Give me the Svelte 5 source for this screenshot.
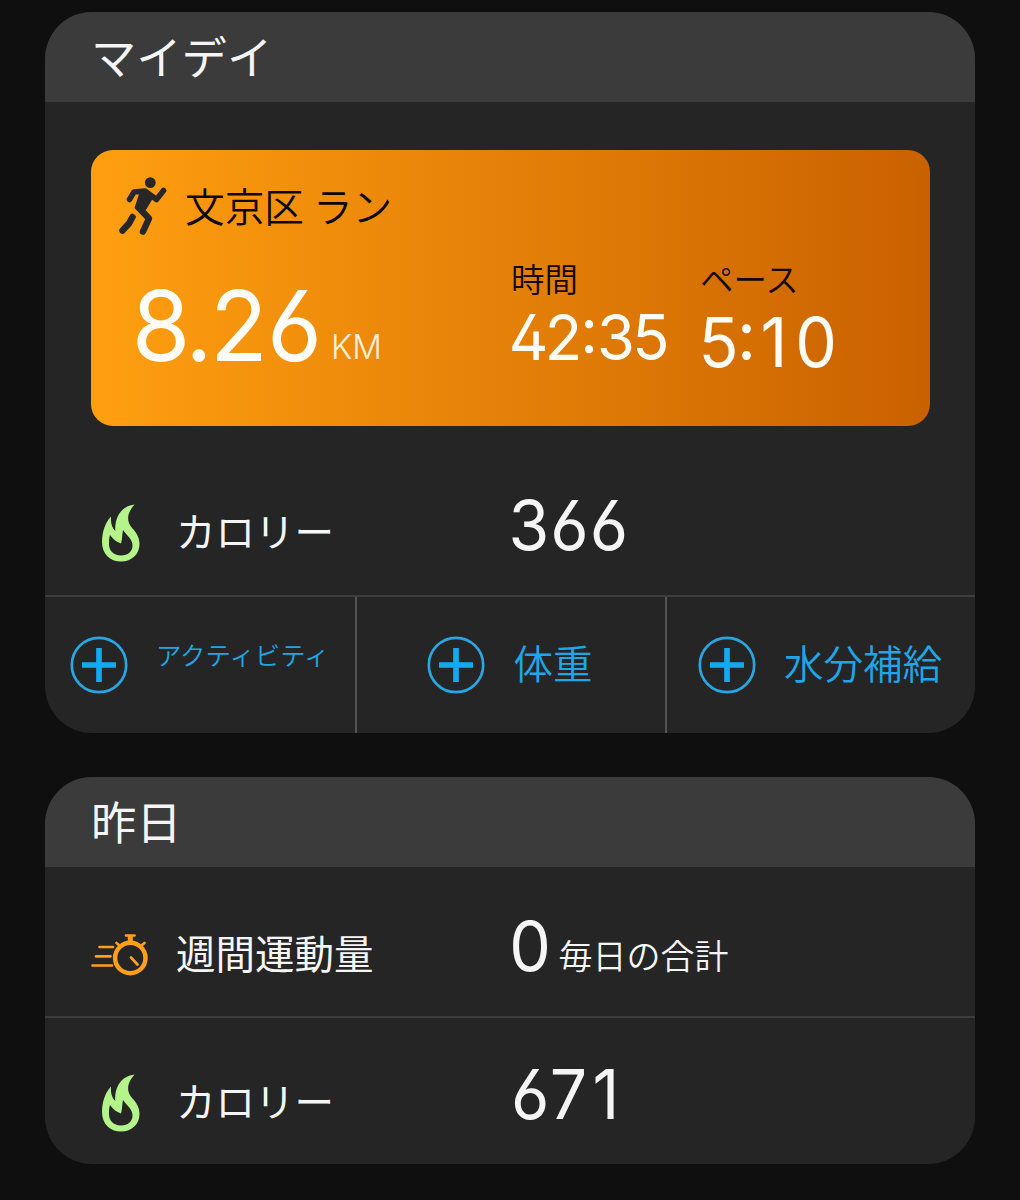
<script>
  const actions = [
    { label: 'アクティビティ', kind: 'activity' },
    { label: '体重', kind: 'weight' },
    { label: '水分補給', kind: 'water' },
  ];
</script>

<!-- Digits are condensed slightly; centers holds the middle of each character. -->
{#snippet num(text, width, cap, centers)}
  <svg class="num" {width} height={cap} aria-label={text}>
    <text transform="scale(0.97 1)" text-anchor="middle" x={centers.map((x) => x / 0.97).join(' ')} y={cap} font-size={cap / 0.727}>{text}</text>
  </svg>
{/snippet}

{#snippet flame()}
  <svg class="flame" width="38" height="58" viewBox="0 0 38 58">
    <path fill-rule="evenodd" d="M32.500 .5C20 2 12.500 12 13.300 27C10 24 8.500 19 9 12.500C3 19 0 28 0 38C0 50 8 57.500 19 57.500C30 57.500 37.500 50 37.500 40C37.500 33 34 28 30 24C24 17 25 9 32.500 .5ZM8 31C11 35 14 38 19 39.500C20.500 35 20 30 21 26C25 32 30.500 35 30.500 41.500C30.500 47.500 26 51.500 19 51.500C11 51.500 7 46 7 40.500C7 37 7 34 8 31Z" />
  </svg>
{/snippet}

<main>
  <section class="card today">
    <h2>マイデイ</h2>
    <div class="content">
      <article class="run">
        <div class="title">
          <svg class="runner" width="48" height="59" viewBox="0 0 48 59">
            <circle cx="31.300" cy="5.600" r="5.400" />
            <path class="limb" d="M10.500 22.500L15 15L26 14L37.500 22.500L44.500 13.500" />
            <path class="torso" d="M17 13H28L35 19.500L27.500 32L22 37L15.500 31L20 17Z" />
            <path class="limb leg" d="M19.500 30.500L30 41.500L24 54.500" />
            <path class="limb leg" d="M13.500 40L10 46.500L3.500 53.500" />
          </svg>
          <span>文京区 ラン</span>
        </div>
        <div class="metrics">
          <div class="distance">
            {@render num('8.26', 187, 71, [27, 65, 105, 160.5])}
            <svg class="num km" width="51" height="25" aria-label="KM">
              <text y="25" font-size="34.400" textLength="51" lengthAdjust="spacingAndGlyphs">KM</text>
            </svg>
          </div>
          <div class="time"><span>時間</span>{@render num('42:35', 157, 46, [17.5, 52.5, 78, 105, 140])}</div>
          <div class="pace"><span>ペース</span>{@render num('5:10', 136, 49.5, [17.5, 45.5, 73, 115])}</div>
        </div>
      </article>
      <div class="row calories">
        <div class="icon">{@render flame()}</div>
        <span class="label">カロリー</span>
        <div class="value">{@render num('366', 117, 49.5, [18, 58.5, 98])}</div>
      </div>
    </div>
    <footer>
      {#each actions as action}
        <button class={action.kind}>
          <svg width="58" height="58" viewBox="0 0 58 58">
            <circle cx="29" cy="29" r="27.200" />
            <path d="M29 12V46M12 29H46" />
          </svg>
          <span>{action.label}</span>
        </button>
      {/each}
    </footer>
  </section>

  <section class="card yesterday">
    <h2>昨日</h2>
    <div class="row weekly">
      <div class="icon">
        <svg class="watch" width="58" height="42" viewBox="0 0 58 42">
          <circle cx="39.300" cy="24" r="15.200" />
          <path class="thick" d="M39.300 2V8" />
          <path d="M35 1.500H43.600M25.500 9L28.500 11.500M53.500 9L50.500 11.500M40 23.500L46.500 30.500M8.500 13H22M5 22.300H19.500M1.500 31.500H21" />
        </svg>
      </div>
      <span class="label">週間運動量</span>
      <div class="value">{@render num('0', 38.5, 49.5, [19])}<span class="unit">毎日の合計</span></div>
    </div>
    <div class="row calories">
      <div class="icon">{@render flame()}</div>
      <span class="label">カロリー</span>
      <div class="value">{@render num('671', 117, 49.5, [19.2, 57.5, 95])}</div>
    </div>
  </section>
</main>

<style>
  :global(body) {
    background: #0f0f0f;
  }
  main {
    box-sizing: border-box;
    width: 1020px;
    height: 1200px;
    padding: 12px 45px 0;
    display: flex;
    flex-direction: column;
    gap: 44px;
    color: #f5f5f5;
    font-family: 'Noto Sans CJK JP', sans-serif;
    font-weight: 400;
    line-height: 1;
    white-space: nowrap;
  }
  .card {
    box-sizing: border-box;
    border-radius: 47px;
    background: #252525;
    overflow: hidden;
    display: flex;
    flex-direction: column;
  }
  .today {
    height: 721px;
  }
  .yesterday {
    height: 387px;
  }
  h2 {
    box-sizing: border-box;
    margin: 0;
    height: 90px;
    padding: 0 46px 2px;
    display: flex;
    align-items: center;
    flex-shrink: 0;
    background: #3b3b3b;
    font-size: 45.300px;
    font-weight: inherit;
  }
  .content {
    height: 493px;
    padding-top: 48px;
    box-sizing: border-box;
    flex-shrink: 0;
  }
  .num {
    display: block;
    overflow: visible;
    flex-shrink: 0;
    fill: currentColor;
    font-family: Inter, sans-serif;
    font-weight: 420;
    font-feature-settings: 'cv02', 'cv03', 'calt', 'case';
  }
  .run {
    box-sizing: border-box;
    height: 276px;
    margin: 0 45px 0 46px;
    padding: 26px 28px;
    border-radius: 22px;
    background: linear-gradient(90deg, #ff9f10, #ca6100);
    color: #fffdf5;
  }
  .title {
    display: flex;
    align-items: center;
    gap: 18px;
    height: 60px;
    color: #0d0500;
    font-size: 39.700px;
    font-weight: 350;
  }
  .title span {
    padding-bottom: 3px;
  }
  .runner {
    fill: #272727;
  }
  .limb {
    fill: none;
    stroke: #272727;
    stroke-width: 5.500;
    stroke-linecap: round;
    stroke-linejoin: round;
  }
  .leg {
    stroke-width: 6.500;
  }
  .metrics {
    display: flex;
    align-items: flex-start;
    padding-top: 25px;
  }
  .distance {
    display: flex;
    align-items: flex-end;
    width: 376px;
    padding: 29px 0 0 15px;
    box-sizing: border-box;
    gap: 10px;
  }
  .km {
    opacity: .9;
    margin-bottom: 2px;
    font-weight: 360;
  }
  .time,
  .pace {
    display: flex;
    flex-direction: column;
    font-size: 33.500px;
    font-weight: 350;
  }
  .time {
    width: 190px;
    padding-left: 16px;
    box-sizing: border-box;
    gap: 19px;
  }
  .pace {
    padding-left: 16px;
    gap: 22px;
  }
  .time span,
  .pace span {
    color: #140600;
  }
  .pace span {
    margin-left: -1px;
  }
  .row {
    display: flex;
    align-items: flex-start;
    padding-left: 46px;
  }
  .today .calories {
    padding-top: 78px;
  }
  .icon {
    width: 85px;
    height: 58px;
    flex-shrink: 0;
    display: flex;
  }
  .flame {
    margin-left: 11px;
    fill: #b4f48b;
  }
  .label {
    width: 335px;
    font-size: 39.500px;
    padding-top: 6px;
  }
  .value {
    display: flex;
    margin-top: -4px;
  }
  footer {
    flex: 1;
    display: grid;
    grid-template-columns: 312px 310px 308px;
    border-top: 2px solid #3d3d3d;
  }
  button {
    display: flex;
    align-items: flex-start;
    gap: 28px;
    margin: 0;
    padding: 38.500px 0 0;
    border: 0;
    border-right: 2px solid #535353;
    background: none;
    color: #1fa6e8;
    font: inherit;
    font-weight: 350;
    font-size: 39.500px;
  }
  button span {
    padding-top: 6.500px;
  }
  button svg {
    fill: none;
    stroke: #2ba5df;
    stroke-width: 2.700;
    flex-shrink: 0;
  }
  button path {
    stroke: #12aaf2;
    stroke-width: 5.700;
  }
  .activity {
    padding-left: 25px;
    font-size: 25.400px;
  }
  .weight {
    padding-left: 70.400px;
  }
  .water {
    padding-left: 31px;
    border-right: 0;
  }
  .weekly {
    height: 151px;
    box-sizing: border-box;
    padding-top: 67px;
    border-bottom: 2px solid #3d3d3d;
  }
  .weekly .icon {
    height: 42px;
  }
  .weekly .label {
    padding-top: 0;
    margin-top: -2px;
  }
  .weekly .value {
    margin-top: -13px;
    align-items: flex-start;
  }
  .watch {
    fill: none;
    stroke: #ff9f1c;
    stroke-width: 2.700;
    stroke-linecap: round;
  }
  .watch circle {
    stroke-width: 4.500;
  }
  .watch .thick {
    stroke-width: 5;
    stroke-linecap: butt;
  }
  .unit {
    font-size: 34px;
    font-weight: 350;
    padding: 17px 0 0 9px;
  }
  .yesterday .calories {
    padding-top: 56px;
  }
  .yesterday .calories .value {
    margin-top: -5px;
  }
</style>
